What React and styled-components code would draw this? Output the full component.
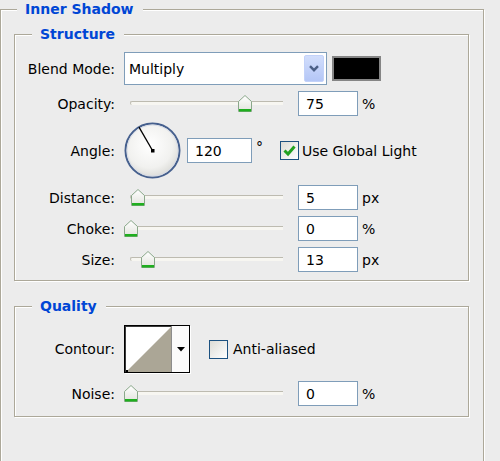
import React from "react";
import styled, { createGlobalStyle } from "styled-components";

const GlobalStyle = createGlobalStyle`
  html, body {
    margin: 0;
    padding: 0;
    background: #ececec;
    overflow: hidden;
  }
  body {
    font-family: "DejaVu Sans", Verdana, sans-serif;
    font-size: 14px;
    color: #000;
  }
`;

const Page = styled.div`
  width: 500px;
  height: 461px;
  padding-top: 1px;
  box-sizing: border-box;
  overflow: hidden;
`;

const Group = styled.fieldset`
  margin: ${(p) => p.$margin || "0"};
  padding: ${(p) => p.$padding || "0"};
  width: ${(p) => (p.$width ? `${p.$width}px` : "auto")};
  min-width: 0;
  box-sizing: border-box;
  border: 1px solid #aca899;
  box-shadow: inset 1px 1px 0 #fff, 1px 1px 0 #fff;
`;

const Legend = styled.legend`
  margin-left: ${(p) => p.$offset}px;
  padding: 0 9px 0 8px;
  font-weight: bold;
  line-height: 16px;
  color: #0046d5;
  background: #ececec;
`;

const Stack = styled.div`
  display: flex;
  flex-direction: column;
  gap: ${(p) => p.$gap}px;
`;

const Row = styled.div`
  display: flex;
  align-items: center;
  height: ${(p) => p.$h}px;
`;

const Label = styled.label`
  flex-shrink: 0;
  width: 100px;
  margin-right: 9px;
  text-align: right;
  white-space: nowrap;
`;

const Field = styled.input`
  flex-shrink: 0;
  width: ${(p) => p.$w || 60}px;
  height: 25px;
  margin: 0 0 0 ${(p) => p.$gap || 0}px;
  padding: 0 0 0 7px;
  box-sizing: border-box;
  border: 1px solid #7f9db9;
  background: #fff;
  font: inherit;
  color: #000;
  outline: none;
`;

const Unit = styled.span`
  margin-left: 4px;
  align-self: ${(p) => (p.$top ? "flex-start" : "center")};
  margin-top: ${(p) => (p.$top ? "17px" : "0")};
`;

/* blend mode select */
const Select = styled.div`
  display: flex;
  align-items: center;
  width: 203px;
  height: 33px;
  padding: 0 2px 0 4px;
  box-sizing: border-box;
  border: 1px solid #7f9db9;
  background: #fff;
`;

const SelectText = styled.span`
  flex: 1;
`;

const DropButton = styled.div`
  display: flex;
  align-items: center;
  justify-content: center;
  width: 20px;
  height: 27px;
  box-sizing: border-box;
  border: 1px solid #c3d2f9;
  border-radius: 2px;
  background: linear-gradient(#d2defc, #b4c6f6);
`;

const Swatch = styled.div`
  width: 49px;
  height: 25px;
  margin-left: 5px;
  box-sizing: border-box;
  border: 2px solid #858585;
  background: #000;
`;

/* sliders */
const SliderBox = styled.div`
  position: relative;
  display: flex;
  align-items: center;
  flex-shrink: 0;
  width: 166px;
  height: 25px;
  padding: 0 7px 0 6px;
  margin-right: 8px;
  box-sizing: border-box;
`;

const Track = styled.div`
  flex: 1;
  height: 4px;
  margin-top: -1px;
  box-sizing: border-box;
  border-top: 1px solid #bdbbb0;
  border-left: 1px solid #bdbbb0;
  border-radius: 3px 0 0 3px;
  background: #f7f6f1;
`;

const Thumb = styled.svg`
  position: absolute;
  top: 4px;
`;

/* angle */
const DialSvg = styled.svg`
  flex-shrink: 0;
`;

const CheckBox = styled.div`
  display: flex;
  align-items: center;
  justify-content: center;
  flex-shrink: 0;
  width: 19px;
  height: 19px;
  margin-left: ${(p) => p.$gap}px;
  box-sizing: border-box;
  border: 1px solid #1c5180;
  background: linear-gradient(135deg, #dcdcd6, #fff);
`;

const CheckText = styled.span`
  margin-left: ${(p) => p.$gap || 3}px;
  white-space: nowrap;
`;

/* contour */
const Contour = styled.div`
  display: flex;
  flex-shrink: 0;
  width: 66px;
  height: 48px;
  box-sizing: border-box;
  border: 1px solid #000;
  box-shadow: inset 1px 1px 0 #3a3a3a, 1px 1px 0 #fff;
  background: #fff;
`;

const ContourPreview = styled.div`
  width: 47px;
  padding: 1px 0 0 1px;
  box-sizing: border-box;
  border-right: 1px solid #8d8d8d;
  display: flex;
`;

const ContourArrow = styled.div`
  flex: 1;
  display: flex;
  align-items: center;
  justify-content: center;
  background: #fbfbfb;
`;

function Slider({ pos }) {
  return (
    <SliderBox>
      <Track />
      <Thumb
        width="14"
        height="17"
        viewBox="0 0 14 17"
        style={{ left: Math.round(pos * 152) }}
      >
        <defs>
          <linearGradient id="thumbFill" x1="0" y1="0" x2="0" y2="1">
            <stop offset="0" stopColor="#ffffff" />
            <stop offset="1" stopColor="#e2e3dc" />
          </linearGradient>
        </defs>
        <path
          d="M0.5 6.5 L7 0.5 L13.5 6.5 V16.5 H0.5 Z"
          fill="url(#thumbFill)"
          stroke="#8aa88a"
        />
        <rect x="1" y="14" width="12" height="2.5" fill="#1fae1f" />
      </Thumb>
    </SliderBox>
  );
}

function SliderRow({ label, pos, value, unit }) {
  return (
    <Row $h={25}>
      <Label>{label}</Label>
      <Slider pos={pos} />
      <Field defaultValue={value} />
      <Unit>{unit}</Unit>
    </Row>
  );
}

function Dial({ angle }) {
  const r = (angle * Math.PI) / 180;
  const x = 28.5 + Math.cos(r) * 27;
  const y = 28.5 - Math.sin(r) * 27;
  return (
    <DialSvg width="57" height="57" viewBox="0 0 57 57">
      <defs>
        <radialGradient id="dialFill" cx="0.45" cy="0.4" r="0.6">
          <stop offset="0" stopColor="#ffffff" />
          <stop offset="0.7" stopColor="#f1f1ef" />
          <stop offset="1" stopColor="#dcdcd8" />
        </radialGradient>
      </defs>
      <circle cx="28.5" cy="28.5" r="27" fill="url(#dialFill)" stroke="#46608e" strokeWidth="2" />
      <circle cx="28.5" cy="28.5" r="25.5" fill="none" stroke="#d6dbe6" strokeWidth="1" />
      <line x1="28.5" y1="28.5" x2={x} y2={y} stroke="#000" strokeWidth="1.3" />
      <rect x="27" y="27" width="3.5" height="3.5" fill="#000" />
    </DialSvg>
  );
}

export default function App() {
  return (
    <Page>
      <GlobalStyle />
      <Group $width={484} $padding="0 0 60px 0">
        <Legend $offset={16}>Inner Shadow</Legend>

        <Group $margin="9px 14px 0 13px" $padding="10px 0 8px 0">
          <Legend $offset={17}>Structure</Legend>
          <Stack $gap={6}>
            <Row $h={33}>
              <Label>Blend Mode:</Label>
              <Select>
                <SelectText>Multiply</SelectText>
                <DropButton>
                  <svg width="10" height="7" viewBox="0 0 10 7">
                    <path d="M1 1.2 L5 5.2 L9 1.2" fill="none" stroke="#4b5f86" strokeWidth="2.4" />
                  </svg>
                </DropButton>
              </Select>
              <Swatch />
            </Row>

            <SliderRow label="Opacity:" pos={0.75} value="75" unit="%" />

            <Row $h={57}>
              <Label>Angle:</Label>
              <Dial angle={120} />
              <Field $w={65} $gap={6} defaultValue="120" />
              <Unit $top>°</Unit>
              <CheckBox $gap={17}>
                <svg width="13" height="12" viewBox="0 0 13 12">
                  <path d="M1.5 5.5 L5 9 L11.5 1.5" fill="none" stroke="#21a121" strokeWidth="3" />
                </svg>
              </CheckBox>
              <CheckText>Use Global Light</CheckText>
            </Row>

            <SliderRow label="Distance:" pos={0.046} value="5" unit="px" />
            <SliderRow label="Choke:" pos={0} value="0" unit="%" />
            <SliderRow label="Size:" pos={0.112} value="13" unit="px" />
          </Stack>
        </Group>

        <Group $margin="17px 14px 0 13px" $padding="11px 0 10px 0">
          <Legend $offset={17}>Quality</Legend>
          <Stack $gap={8}>
            <Row $h={48}>
              <Label>Contour:</Label>
              <Contour>
                <ContourPreview>
                  <svg width="45" height="45" viewBox="0 0 45 45">
                    <polygon points="0,45 45,0 45,45" fill="#aba696" />
                    <rect x="0" y="43" width="2" height="2" fill="#000" />
                  </svg>
                </ContourPreview>
                <ContourArrow>
                  <svg width="8" height="5" viewBox="0 0 8 5">
                    <polygon points="0,0 8,0 4,4.5" fill="#000" />
                  </svg>
                </ContourArrow>
              </Contour>
              <CheckBox $gap={19} />
              <CheckText $gap={5}>Anti-aliased</CheckText>
            </Row>
            <SliderRow label="Noise:" pos={0} value="0" unit="%" />
          </Stack>
        </Group>
      </Group>
    </Page>
  );
}
